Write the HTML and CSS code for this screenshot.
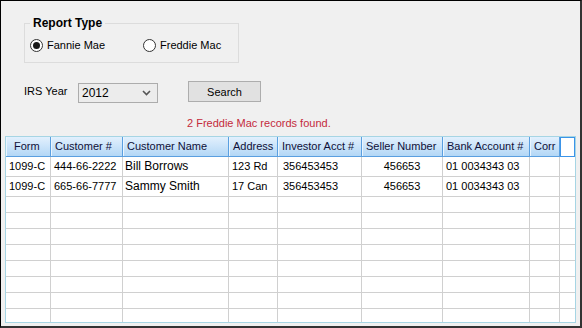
FILE: index.html
```html
<!DOCTYPE html>
<html lang="en">
<head>
  <meta charset="UTF-8">
  <title>IRS Report</title>
  <link rel="stylesheet" href="styles.css">
</head>
<body>
<div class="window">
  <fieldset class="report-type">
    <legend>Report Type</legend>
    <div class="options">
      <label class="radio first"><span class="circle checked"></span>Fannie Mae</label>
      <label class="radio"><span class="circle"></span>Freddie Mac</label>
    </div>
  </fieldset>

  <div class="search-row">
    <span class="label">IRS Year</span>
    <div class="combo">
      <span>2012</span>
      <svg width="9" height="6" viewBox="0 0 9 6"><path d="M1 1 L4.5 4.5 L8 1" fill="none" stroke="#555" stroke-width="1.6"/></svg>
    </div>
    <button class="btn">Search</button>
  </div>

  <div class="message">2 Freddie Mac records found.</div>

  <div class="grid">
    <div class="hd hd-form">Form</div>
    <div class="hd">Customer #</div>
    <div class="hd">Customer Name</div>
    <div class="hd">Address</div>
    <div class="hd">Investor Acct #</div>
    <div class="hd">Seller Number</div>
    <div class="hd">Bank Account #</div>
    <div class="hd">Corr</div>
    <div class="hd hd-end"></div>

    <div class="cell">1099-C</div>
    <div class="cell">444-66-2222</div>
    <div class="cell name">Bill Borrows</div>
    <div class="cell">123 Rd</div>
    <div class="cell wide">356453453</div>
    <div class="cell center">456653</div>
    <div class="cell">01 0034343 03</div>
    <div class="cell"></div>
    <div class="cell last"></div>

    <div class="cell">1099-C</div>
    <div class="cell">665-66-7777</div>
    <div class="cell name">Sammy Smith</div>
    <div class="cell">17 Can</div>
    <div class="cell wide">356453453</div>
    <div class="cell center">456653</div>
    <div class="cell">01 0034343 03</div>
    <div class="cell"></div>
    <div class="cell last"></div>
  </div>
</div>
<script>
  // fill the empty rows of the grid
  var grid = document.querySelector(".grid");
  for (var r = 0; r < 8; r++) {
    for (var c = 0; c < 9; c++) {
      var d = document.createElement("div");
      d.className = c == 8 ? "cell last" : "cell";
      grid.appendChild(d);
    }
  }
</script>
</body>
</html>
```

FILE: styles.css
```css
* {
  margin: 0;
  padding: 0;
  box-sizing: border-box;
}

body {
  font-family: "Liberation Sans", Arial, sans-serif;
  font-size: 11px;
  color: #000;
}

.window {
  width: 582px;
  height: 328px;
  background-color: #f0f0f0;
  border-left: 1px solid #000;
  border-top: 1px solid #000;
  border-right: 2px solid #333;
  border-bottom: 2px solid #333;
  overflow: hidden;
}

/* group box */
.report-type {
  margin: 16px 0 0 23px;
  width: 215px;
  min-inline-size: 0;
  border: 1px solid #dcdcdc;
  padding: 0 0 10px 5px;
}

.report-type legend {
  font-weight: bold;
  font-size: 12px;
  line-height: 13px;
  padding: 0 3px;
}

.options {
  display: flex;
  margin-top: 9px;
}

.radio {
  display: flex;
  align-items: center;
  gap: 4px;
  line-height: 13px;
}

.radio.first {
  width: 113px;
}

.circle {
  width: 13px;
  height: 13px;
  border: 1px solid #333;
  border-radius: 50%;
  background-color: #fff;
  position: relative;
}

.circle.checked::after {
  content: "";
  position: absolute;
  left: 2px;
  top: 2px;
  width: 7px;
  height: 7px;
  border-radius: 50%;
  background-color: #1a1a1a;
}

/* year + search */
.search-row {
  display: flex;
  align-items: flex-start;
  margin-top: 18px;
  padding-left: 23px;
}

.search-row .label {
  width: 54px;
  margin-top: 4px;
  line-height: 13px;
}

.combo {
  width: 80px;
  height: 20px;
  margin-top: 2px;
  border: 1px solid #acacac;
  background-color: #ececec;
  display: flex;
  align-items: center;
  justify-content: space-between;
  padding: 0 6px 0 3px;
  font-size: 12px;
}

.btn {
  width: 73px;
  height: 21px;
  margin-left: 30px;
  border: 1px solid #adadad;
  background-color: #e1e1e1;
  font-family: inherit;
  font-size: 11px;
  color: #000;
}

.message {
  color: #c42a3c;
  line-height: 13px;
  margin-top: 14px;
  padding-left: 186px;
}

/* data grid */
.grid {
  margin: 6px 0 0 4px;
  width: 571px;
  height: 187px;
  border: 1px solid #a6d5e4;
  background-color: #fff;
  overflow: hidden;
  display: grid;
  grid-template-columns: 45px 72px 106px 49px 84px 81px 87px 30px 15px;
  grid-template-rows: 20px 20px 20px repeat(8, 16px);
}

.hd {
  background: linear-gradient(#e2f0fd, #b3d7f6);
  border-right: 1px solid #5a9fe0;
  border-bottom: 1px solid #5a9fe0;
  box-shadow: inset 1px 0 #eaf5fe;
  color: #101038;
  line-height: 19px;
  padding-left: 4px;
  white-space: nowrap;
  overflow: hidden;
}

.hd-form {
  padding-left: 8px;
}

.hd-end {
  background: #fff;
  border: 1px solid #3b94e8;
  box-shadow: none;
}

.cell {
  border-right: 1px solid #d0d0d0;
  border-bottom: 1px solid #d0d0d0;
  padding-left: 3px;
  line-height: 19px;
  white-space: nowrap;
  overflow: hidden;
}

.cell.last {
  border-right: none;
}

.cell.name {
  font-size: 12px;
  padding-left: 2px;
}

.cell.wide {
  padding-left: 5px;
}

.cell.center {
  text-align: center;
  padding-left: 0;
}
```
